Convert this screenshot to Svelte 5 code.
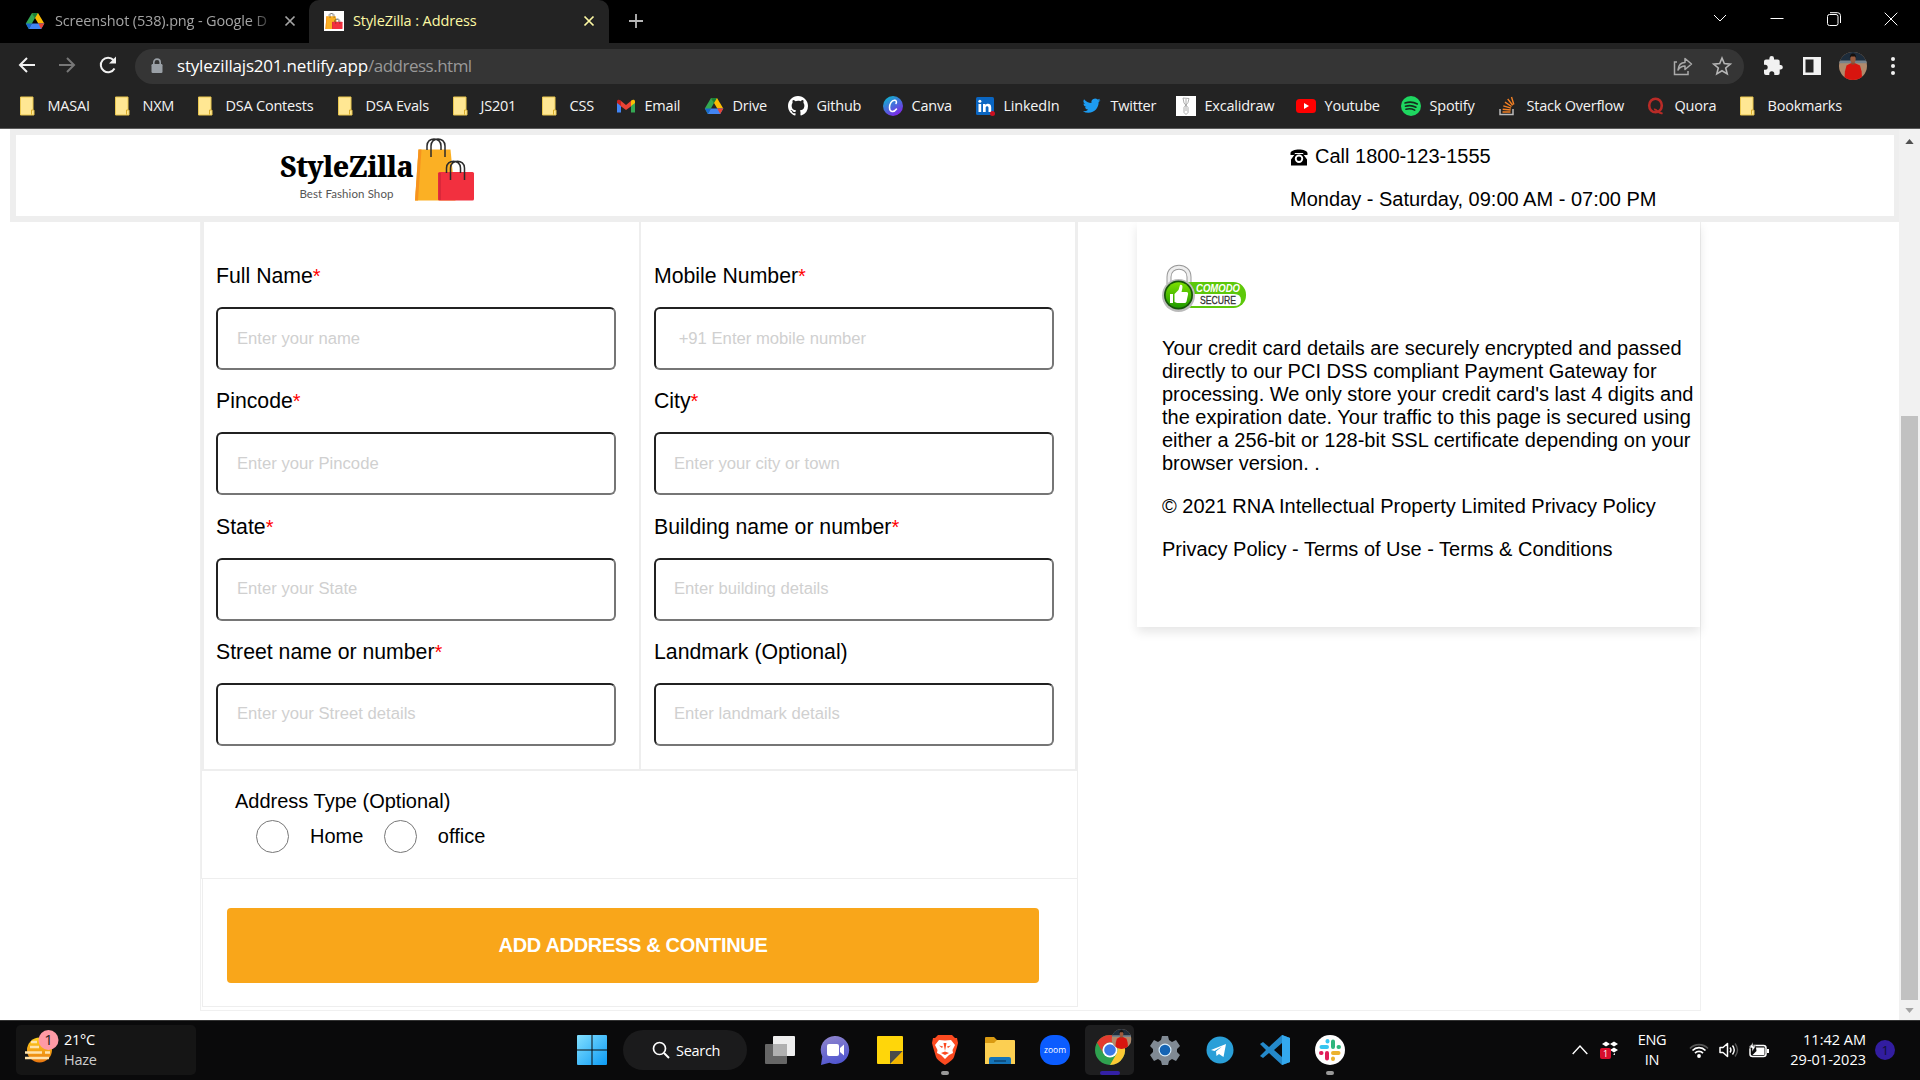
<script>
  const bookmarks = [
    ['folder', 'MASAI'], ['folder', 'NXM'], ['folder', 'DSA Contests'], ['folder', 'DSA Evals'],
    ['folder', 'JS201'], ['folder', 'CSS'], ['gmail', 'Email'], ['drive', 'Drive'],
    ['github', 'Github'], ['canva', 'Canva'], ['linkedin', 'LinkedIn'], ['twitter', 'Twitter'],
    ['excalidraw', 'Excalidraw'], ['youtube', 'Youtube'], ['spotify', 'Spotify'],
    ['stack', 'Stack Overflow'], ['quora', 'Quora'], ['folder', 'Bookmarks']
  ];
  const columns = [
    [
      { label: 'Full Name', required: true, hint: 'Enter your name' },
      { label: 'Pincode', required: true, hint: 'Enter your Pincode' },
      { label: 'State', required: true, hint: 'Enter your State' },
      { label: 'Street name or number', required: true, hint: 'Enter your Street details' }
    ],
    [
      { label: 'Mobile Number', required: true, hint: ' +91 Enter mobile number' },
      { label: 'City', required: true, hint: 'Enter your city or town' },
      { label: 'Building name or number', required: true, hint: 'Enter building details' },
      { label: 'Landmark (Optional)', required: false, hint: 'Enter landmark details' }
    ]
  ];
  const apps = ['taskview', 'chat', 'notes', 'brave', 'files', 'zoom', 'chrome', 'settings', 'telegram', 'vscode', 'slack'];
</script>

{#snippet drive()}
  <svg viewBox="0 0 20 20" width="20" height="20">
    <path d="M7 2h6l6.3 10.5h-6z" fill="#fbbc04" />
    <path d="M7 2 .8 12.6 3.8 18 10 7z" fill="#34a853" />
    <path d="M3.8 18 6.8 12.5h12.5L16.2 18z" fill="#4285f4" />
    <path d="M13.3 12.5h6L16.2 18z" fill="#ea4335" />
    <path d="M7 2h6l-3 5z" fill="#188038" />
    <path d="M3.8 18 6.8 12.5h-6z" fill="#1967d2" />
  </svg>
{/snippet}

{#snippet bags()}
  <path d="M3.500 12.500h32l5 51H0z" fill="#fbb024" />
  <path d="M3.500 12.500h3L3 63.500H0z" fill="#f7931e" />
  <path d="M12 13V9c0-9.500 14-9.500 14 0v4M16 20V9c0-9.500 14-9.500 14 0v11" fill="none" stroke="#2b2b2b" stroke-width="1.500" />
  <rect x="23" y="35" width="36" height="28.500" rx="1.500" fill="#f2303f" />
  <path d="M23.500 36H26v27h-2.500z" fill="#d9283a" />
  <path d="M31.500 36v-5c0-9 14-9 14 0v5M35.500 43V31c0-9 14-9 14 0v12" fill="none" stroke="#2b2b2b" stroke-width="1.500" />
{/snippet}

{#snippet portrait()}
  <clipPath id="face"><circle cx="13" cy="13" r="13" /></clipPath>
  <g clip-path="url(#face)">
    <path d="M0 0h26v26H0z" fill="#b08a6c" />
    <path d="M0 0h26v9H0z" fill="#1d2c3b" />
    <path d="M0 8h26v2.500H0z" fill="#76828c" />
    <path d="M5 26l.5-8L7 12.500l4-2h4l4.500 2L21 18l.5 8z" fill="#d8150f" />
    <path d="M11.500 8h3v3.500h-3z" fill="#8a4c33" />
    <ellipse cx="13" cy="6.500" rx="2.500" ry="3.500" fill="#9b5b3e" />
    <path d="M10 5.500c0-5.500 6-5.500 6 0l-1-1.300h-4z" fill="#15100e" />
  </g>
{/snippet}

{#snippet mark(name)}
  {#if name === 'folder'}
    <svg class="mark" viewBox="0 0 20 20"><path d="M1.500 1H14v12.500l1 1V19H1.500z" fill="#ffe793" stroke="#e9c64f" /><path d="M12.500 18.500v-4.500h2" fill="none" stroke="#d9ad2b" /></svg>
  {:else if name === 'gmail'}
    <svg class="mark" viewBox="0 0 20 20"><path d="M1 5v11.500h4V9z" fill="#4285f4" /><path d="M15 9v7.500h4V5z" fill="#34a853" /><path d="M4.500 4.500 10 9l5.500-4.500V10L10 14l-5.500-4z" fill="#ea4335" /><path d="M1 5.500c0-2 2-2.500 4-.8V10L1 7z" fill="#c5221f" /><path d="M19 5.500c0-2-2-2.500-4-.8V10l4-3z" fill="#fbbc04" /></svg>
  {:else if name === 'drive'}
    <span class="mark">{@render drive()}</span>
  {:else if name === 'github'}
    <svg class="mark" viewBox="0 0 16 16"><path fill="#fff" d="M8 0C3.580 0 0 3.580 0 8c0 3.540 2.290 6.530 5.470 7.590.4.070.550-.170.550-.380 0-.190-.010-.820-.010-1.490-2.010.370-2.530-.490-2.690-.940-.090-.230-.480-.940-.820-1.130-.280-.150-.680-.520-.010-.530.630-.010 1.080.580 1.230.820.720 1.210 1.870.870 2.330.660.070-.520.280-.870.510-1.070-1.780-.200-3.640-.890-3.640-3.950 0-.870.310-1.590.820-2.150-.080-.200-.360-1.020.080-2.120 0 0 .670-.210 2.200.820A7.600 7.600 0 0 1 8 3.860c.680 0 1.360.090 2 .270 1.530-1.040 2.200-.820 2.200-.820.440 1.100.160 1.920.080 2.120.510.560.820 1.270.820 2.150 0 3.070-1.870 3.750-3.650 3.950.290.250.540.730.540 1.480 0 1.070-.010 1.930-.010 2.200 0 .210.150.460.550.380A8.010 8.010 0 0 0 16 8c0-4.420-3.580-8-8-8z" /></svg>
  {:else if name === 'canva'}
    <svg class="mark" viewBox="0 0 20 20"><defs><linearGradient id="cv" x1="0" y1="0" x2=".6" y2="1"><stop offset="0" stop-color="#00c4cc" /><stop offset="1" stop-color="#7d2ae8" /></linearGradient></defs><circle cx="10" cy="10" r="10" fill="url(#cv)" /><path d="M13 7.500c1-1.500.3-3.300-1.500-3.200C8.500 4.500 6.500 8 6.500 11.500c0 5 4.500 5 7 1.500" fill="none" stroke="#fff" stroke-width="1.500" stroke-linecap="round" /></svg>
  {:else if name === 'linkedin'}
    <svg class="mark" viewBox="0 0 20 20"><rect x="1" y="1" width="18" height="18" rx="1.500" fill="#0a66c2" /><path d="M3.500 8h2.700v8H3.500zM8 8h2.500v1.200c1.200-2.200 5.700-2 5.700 2V16h-2.700v-4.300c0-2-2.800-2-2.800 0V16H8z" fill="#fff" /><circle cx="4.850" cy="5.300" r="1.500" fill="#fff" /><circle cx="17.500" cy="17.500" r="2.500" fill="#cc1020" /></svg>
  {:else if name === 'twitter'}
    <svg class="mark" viewBox="0 0 24 24"><path transform="translate(1 1) scale(.88)" fill="#1d9bf0" d="M23.950 4.570a10 10 0 0 1-2.820.77 4.960 4.960 0 0 0 2.160-2.720c-.95.55-2 .95-3.130 1.180a4.920 4.920 0 0 0-8.380 4.480C7.690 8.090 4.070 6.130 1.640 3.160a4.920 4.920 0 0 0 1.520 6.570 4.900 4.900 0 0 1-2.230-.61v.06a4.920 4.920 0 0 0 3.950 4.830 5 5 0 0 1-2.210.08 4.940 4.940 0 0 0 4.600 3.420A9.870 9.870 0 0 1 0 19.540a14 14 0 0 0 7.550 2.210c9.050 0 14-7.500 14-13.980 0-.21 0-.42-.02-.63a9.940 9.940 0 0 0 2.460-2.550z" /></svg>
  {:else if name === 'excalidraw'}
    <svg class="mark" viewBox="0 0 20 20"><path d="M0 0h20v20H0z" fill="#fff" /><path d="M7 2l6 .5-1 4-4 5v5l2 2 2-2v-5L8 7 7 2m3 1v12" fill="none" stroke="#999" stroke-width=".8" /></svg>
  {:else if name === 'youtube'}
    <svg class="mark" viewBox="0 0 20 20"><rect y="3" width="20" height="14" rx="3.500" fill="#f00" /><path d="m8 7 5 3-5 3z" fill="#fff" /></svg>
  {:else if name === 'spotify'}
    <svg class="mark" viewBox="0 0 20 20"><circle cx="10" cy="10" r="10" fill="#1ed760" /><path d="M4 7c4-1.300 9-.9 12.300 1M4.500 10.200c3.500-1 7.500-.6 10.500 1M5 13.200c3-.8 6-.5 8.700.9" fill="none" stroke="#152b1c" stroke-width="1.600" stroke-linecap="round" /></svg>
  {:else if name === 'stack'}
    <svg class="mark" viewBox="0 0 20 20"><path d="M2 13v5.500h13V13" fill="none" stroke="#bcbbbb" stroke-width="1.500" /><path d="M4.500 16h8M4.700 13.200l8 .8M5.300 9.800l7.700 2.300M7 6.200l6.500 4.300M9.700 3l5 6.200M13.500 1l2.300 7.500" stroke="#f48024" stroke-width="1.400" /></svg>
  {:else if name === 'quora'}
    <svg class="mark" viewBox="0 0 20 20"><ellipse cx="9.500" cy="9.500" rx="6.300" ry="6.800" fill="none" stroke="#b92b27" stroke-width="2.600" /><path d="M8 13.500c3-1 4 5 8.500 3.500" fill="none" stroke="#b92b27" stroke-width="2" /></svg>
  {/if}
{/snippet}

{#snippet cross()}
  <svg class="cross" viewBox="0 0 12 12" width="12" height="12"><path d="m1.500 1.500 9 9m0-9-9 9" stroke="currentColor" stroke-width="1.700" /></svg>
{/snippet}

<div class="screen">
  <div class="tabs">
    <div class="tab idle">
      <span class="tab-icon">{@render drive()}</span>
      <span class="tab-title">Screenshot (538).png - Google D</span>
      {@render cross()}
    </div>
    <div class="tab active">
      <svg class="favicon" viewBox="-5 -8 69 80" preserveAspectRatio="none"><path d="M-5-8h69v80H-5z" fill="#fff" />{@render bags()}</svg>
      <span class="tab-title">StyleZilla : Address</span>
      {@render cross()}
    </div>
    <svg class="new-tab" viewBox="0 0 16 16" width="16" height="16"><path d="M8 1v14M1 8h14" stroke="#b8b8b8" stroke-width="1.800" /></svg>
    <div class="window-buttons">
      <svg viewBox="0 0 14 14"><path d="m1 3 6 6 6-6" /></svg>
      <svg viewBox="0 0 14 14"><path d="M.5 6.500h13" /></svg>
      <svg viewBox="0 0 14 14"><rect x=".5" y="2.500" width="10.500" height="11" rx="2" /><path d="M3 .7h7.500q3 0 3 3V11" /></svg>
      <svg viewBox="0 0 14 14"><path d="m.7.7 12.600 12.600m0-12.600L.7 13.300" /></svg>
    </div>
  </div>

  <div class="toolbar">
    <div class="nav">
      <svg viewBox="0 0 20 20"><path d="M18 10H3m7-7-7 7 7 7" fill="none" stroke="#f1f1f1" stroke-width="2" /></svg>
      <svg viewBox="0 0 20 20"><path d="M2 10h15m-7-7 7 7-7 7" fill="none" stroke="#777" stroke-width="2" /></svg>
      <svg viewBox="0 0 20 20"><path d="M17.500 13.500A7.300 7.300 0 1 1 16.500 5" fill="none" stroke="#f1f1f1" stroke-width="2" /><path d="M19 1.500v7h-7z" fill="#f1f1f1" /></svg>
    </div>
    <div class="address">
      <svg class="lock" viewBox="0 0 12 16"><path d="M2.800 7V4.300a3.200 3.200 0 0 1 6.400 0V7" fill="none" stroke="#9aa0a6" stroke-width="1.600" /><rect x=".5" y="6" width="11" height="9" rx="1.200" fill="#9aa0a6" /></svg>
      <span class="host">stylezillajs201.netlify.app</span><span class="path">/address.html</span>
      <svg class="share" viewBox="0 0 20 20"><path d="M4 6H1.500v12.500H15V15" fill="none" stroke="#aaa" stroke-width="1.500" /><path d="M5 14c.5-5 3-7.500 7-7.500V2.500L18.500 8 12 13.500V10C9 10 7 11 5 14z" fill="none" stroke="#aaa" stroke-width="1.500" stroke-linejoin="round" /></svg>
      <svg class="star" viewBox="0 0 20 20"><path d="m10 2 2.300 5.600 6 .5-4.600 3.900 1.500 5.900-5.200-3.200-5.200 3.200L6.300 12 1.700 8.100l6-.5z" fill="none" stroke="#b5b5b5" stroke-width="1.600" /></svg>
    </div>
    <div class="actions">
      <svg viewBox="0 0 22 22"><path fill="#f1f1f1" d="M19 10h-1.300V6.500a2 2 0 0 0-2-2H12V3.300a2.300 2.300 0 0 0-4.600 0v1.200H4a2 2 0 0 0-2 2v3.300h1.200a2.500 2.500 0 0 1 0 5H2V18a2 2 0 0 0 2 2h3.300v-1.200a2.500 2.500 0 0 1 5 0V20h3.400a2 2 0 0 0 2-2v-3.500H19A2.300 2.300 0 0 0 19 10z" /></svg>
      <svg viewBox="0 0 22 22"><path fill="#f1f1f1" fill-rule="evenodd" d="M2 2h18v18H2zm2.500 2.500v13h8v-13z" /></svg>
      <svg class="avatar" viewBox="0 0 26 26">{@render portrait()}</svg>
      <svg class="more" viewBox="0 0 22 22"><g fill="#f1f1f1"><circle cx="11" cy="4" r="2" /><circle cx="11" cy="11" r="2" /><circle cx="11" cy="18" r="2" /></g></svg>
    </div>
  </div>

  <div class="bookmarks">
    {#each bookmarks as [icon, title]}
      <div class="bookmark">{@render mark(icon)}<span>{title}</span></div>
    {/each}
  </div>

  <div class="viewport">
    <div class="page">
      <header>
        <div class="brand">
          <div class="brand-text"><span class="brand-name">StyleZilla</span><span class="slogan">Best Fashion Shop</span></div>
          <svg class="brand-bags" viewBox="0 0 60 65">{@render bags()}</svg>
        </div>
        <div class="contact">
          <div class="call">
            <svg viewBox="0 0 18 18"><path d="M.5 7V5C1 .2 17 .2 17.500 5v2h-4.300V5H4.800v2z" /><path fill-rule="evenodd" d="M5 6h8l4 5.500V17.500H1v-6zM9 6.500a4.200 4.200 0 1 0 0 8.400 4.200 4.200 0 0 0 0-8.400z" /><circle cx="9" cy="10.700" r="2.300" /></svg>
            Call 1800-123-1555
          </div>
          <div>Monday - Saturday, 09:00 AM - 07:00 PM</div>
        </div>
      </header>

      <main>
        <form>
          <div class="fields">
            {#each columns as column}
              <div class="column">
                {#each column as field}
                  <label>
                    <span class="caption">{field.label}{#if field.required}<i>*</i>{/if}</span>
                    <input type="text" placeholder={field.hint} />
                  </label>
                {/each}
              </div>
            {/each}
          </div>
          <div class="kind">
            <div>Address Type (Optional)</div>
            <div class="choices">
              <span class="radio"></span><span class="choice">Home</span>
              <span class="radio"></span><span class="choice">office</span>
            </div>
          </div>
          <div class="submit"><button type="button">ADD ADDRESS &amp; CONTINUE</button></div>
        </form>
        <aside>
          <svg class="comodo" viewBox="0 0 86 50">
            <defs><linearGradient id="gr" x2="0" y2="1"><stop offset="0" stop-color="#7be000" /><stop offset="1" stop-color="#1f9a00" /></linearGradient></defs>
            <path d="M7 20V13c0-13 20-13 20 0v7" fill="none" stroke="#999" stroke-width="5" />
            <path d="M7 20V13c0-13 20-13 20 0v7" fill="none" stroke="#eee" stroke-width="3" />
            <rect x="17" y="18" width="67" height="26" rx="12.500" fill="#5cc80a" />
            <path d="M20 30h52q7 0 7 6t-7 6H20z" fill="#fff" />
            <circle cx="16.500" cy="31.500" r="16.500" fill="#bbb" /><circle cx="16.500" cy="31" r="14.500" fill="#17540a" /><circle cx="16.500" cy="31" r="12.800" fill="url(#gr)" />
            <path d="M8 30h3v9H8zM12.500 30l4-4 1.500-5c3-1 3 2 1.500 7h5q2 0 1.500 2.500l-1.500 7q-.5 1.500-2 1.500H15l-2.500-1z" fill="#fff" />
            <text class="comodo-name" x="34" y="28" textLength="44" lengthAdjust="spacingAndGlyphs">COMODO</text>
            <text class="comodo-tag" x="38" y="40" textLength="36" lengthAdjust="spacingAndGlyphs">SECURE</text>
          </svg>
          <p>Your credit card details are securely encrypted and passed directly to our PCI DSS compliant Payment Gateway for processing. We only store your credit card's last 4 digits and the expiration date. Your traffic to this page is secured using either a 256-bit or 128-bit SSL certificate depending on your browser version. .</p>
          <p>© 2021 RNA Intellectual Property Limited Privacy Policy</p>
          <p>Privacy Policy - Terms of Use - Terms &amp; Conditions</p>
        </aside>
      </main>
    </div>
    <div class="scrollbar">
      <svg viewBox="0 0 10 6"><path d="M0 6 5 0l5 6z" fill="#505050" /></svg>
      <div class="thumb"></div>
      <svg viewBox="0 0 10 6"><path d="m0 0 5 6 5-6z" fill="#a3a3a3" /></svg>
    </div>
  </div>

  <div class="taskbar">
    <div class="weather">
      <svg viewBox="0 0 36 36" width="36" height="36"><defs><linearGradient id="sun" x2="0" y2="1"><stop offset="0" stop-color="#ffd21c" /><stop offset="1" stop-color="#e87610" /></linearGradient></defs>
        <circle cx="15.500" cy="18" r="12.500" fill="url(#sun)" /><path d="M7 10h6M6 15h9M1 20.500h17m3 0h5M1 26h24" stroke="#ffe3ac" stroke-width="2.300" />
        <circle cx="24.500" cy="8" r="10" fill="#ff9aa5" /><text x="24.500" y="13" text-anchor="middle" class="badge-digit">1</text></svg>
      <div><div>21°C</div><div class="haze">Haze</div></div>
    </div>
    <div class="dock">
      <svg class="start" viewBox="0 0 30 30"><defs><linearGradient id="win" x2="1" y2="1"><stop offset="0" stop-color="#83e0ff" /><stop offset="1" stop-color="#0c9bf5" /></linearGradient></defs><path d="M0 1q0-1 1-1h13.500v14.500H0zM15.500 0H29q1 0 1 1v13.500H15.500zM0 15.500h14.500V30H1q-1 0-1-1zM15.500 15.500H30V29q0 1-1 1H15.500z" fill="url(#win)" /></svg>
      <div class="search">
        <svg viewBox="0 0 18 18"><circle cx="7.500" cy="7.500" r="6" fill="none" stroke="#fff" stroke-width="1.700" /><path d="m12 12 5 5" stroke="#fff" stroke-width="2" /></svg>
        <span>Search</span>
      </div>
      {#each apps as app}
        <div class="app" class:current={app === 'chrome'} class:open={app === 'brave' || app === 'slack'}>
          <svg viewBox="0 0 30 30">
            {#if app === 'taskview'}
              <rect x="0" y="9" width="22" height="20" rx="1" fill="#666" /><rect x="8" y="1" width="22" height="20" rx="1" fill="#eee" /><path d="M8 9h14v12H8z" fill="#b0b0b0" />
            {:else if app === 'chat'}
              <defs><linearGradient id="ch" x2=".3" y2="1"><stop offset="0" stop-color="#9287cc" /><stop offset="1" stop-color="#5257d0" /></linearGradient></defs>
              <path d="M15 1a14 14 0 1 1-5.500 26.800L1 30l1.300-8.500A14 14 0 0 1 15 1z" fill="url(#ch)" /><rect x="7" y="9" width="12" height="12" rx="2" fill="#fff" /><path d="m20 13 4-3.500v11L20 17z" fill="#fff" />
            {:else if app === 'notes'}
              <path d="M2 2q0-1 1-1h24q1 0 1 1v27H3q-1 0-1-1z" fill="#ffd60a" /><path d="M15 29V16h13z" fill="#4a4a4a" /><path d="M16 29l12-13v13z" fill="#f2b400" />
            {:else if app === 'brave'}
              <path d="M8 0h14l3 3h2l1 5-1 4-3 10q-1 3-9 8-8-5-9-8L3 12 2 8l1-5h2z" fill="#fb4a20" />
              <path d="m15 5.500-6-.5-4 5 2.500 5L7 18l4 2 4 4 4-4 4-2-.5-3 2.500-5-4-5z" fill="#fff" />
              <path d="M9 10.500l4 1-1 1.500zM21 10.500l-4 1 1 1.500zM13.500 8h3L15 16zM11 18l4-1.500 4 1.500-4 2z" fill="#fb4a20" />
            {:else if app === 'files'}
              <path d="M0 3q0-1 1-1h8l3 3h17v22H0z" fill="#d99a12" /><path d="M0 8h9l3-3h17q1 0 1 1v23H0z" fill="#fccf52" /><path d="M4 29v-5q0-2 2-2h18q2 0 2 2v5z" fill="#1574b8" /><path d="M9 26h12" stroke="#0c436f" stroke-width="1.500" />
            {:else if app === 'zoom'}
              <rect width="30" height="30" rx="13" fill="#0b5cff" /><text class="zoom-name" x="15" y="18" text-anchor="middle" textLength="22" lengthAdjust="spacingAndGlyphs">zoom</text>
            {:else if app === 'chrome'}
              <circle cx="15" cy="15" r="15" fill="#2fa14f" /><path d="M15 0a15 15 0 0 1 13 7.500H15A7.500 7.500 0 0 0 8.500 18.700L2 7.500A15 15 0 0 1 15 0z" fill="#e33b2e" /><path d="M28 7.500A15 15 0 0 1 15 30l6.500-11.300A7.500 7.500 0 0 0 20 9.500l8-2z" fill="#fcc934" /><circle cx="15" cy="15" r="7.500" fill="#fff" /><circle cx="15" cy="15" r="5.800" fill="#3b78e7" /><g transform="translate(16.500 -6) scale(.77)">{@render portrait()}</g>
            {:else if app === 'settings'}
              <path d="m12 1h6l1 4 3 2 4-2 4 6-3 3v3l3 3-4 6-4-2-3 2-1 4h-6l-1-4-3-2-4 2-4-6 3-3v-3l-3-3 4-6 4 2 3-2z" fill="#808a94" /><circle cx="15" cy="15" r="6.500" fill="#d7ecfa" /><circle cx="15" cy="15" r="5.300" fill="#1464b4" />
            {:else if app === 'telegram'}
              <circle cx="15" cy="15" r="13.500" fill="#2a9fd8" /><path d="m6 15 15-6-2.500 13-4.500-3-2.500 2-.5-4.500 6-5-7.500 4.500z" fill="#fff" />
            {:else if app === 'vscode'}
              <path d="m22 0 8 3v24l-8 3L9 18l-6 5-3-2 6-6-6-6 3-2 6 5zm0 8-8 7 8 7z" fill="#2489ca" fill-rule="evenodd" /><path d="m22 0 8 3v24l-8 3z" fill="#33a8ee" />
            {:else}
              <circle cx="15" cy="15" r="15" fill="#fff" /><g stroke-width="4" stroke-linecap="round"><path d="M6.500 12H12M12.500 6v.5" stroke="#36c5f0" /><path d="M18 6.500V12M23.500 12h.5" stroke="#2eb67d" /><path d="M18 18h5.500M18 23.500v.5" stroke="#ecb22e" /><path d="M12 18v5.500M6.500 18H6" stroke="#e01e5a" /></g>
            {/if}
          </svg>
        </div>
      {/each}
    </div>
    <div class="tray">
      <svg class="up" viewBox="0 0 16 10"><path d="m.7 9 7.300-8 7.300 8" fill="none" stroke="#fff" stroke-width="1.400" /></svg>
      <svg class="dropbox" viewBox="0 0 20 20"><path d="m2 4 4-2.500L10 4 6 6.500zm8 0 4-2.500L18 4l-4 2.500zm0 6 4-2.500 4 2.500-4 2.500zm3 4.500 2-1.500v2z" fill="#fff" /><rect y="8" width="11" height="11" rx="2" fill="#d80d2c" /><text x="5.500" y="17" text-anchor="middle" class="alert-digit">1</text></svg>
      <div class="language"><div>ENG</div><div>IN</div></div>
      <svg class="wifi" viewBox="0 0 20 16"><g fill="none" stroke-width="1.700"><path d="M1 6.500a12.500 12.500 0 0 1 18 0" stroke="#555" /><path d="M3.500 8.500a9 9 0 0 1 13 0M6 11.200a5.500 5.500 0 0 1 8 0" stroke="#fff" /></g><circle cx="10" cy="14" r="1.900" fill="#fff" /></svg>
      <svg class="volume" viewBox="0 0 20 16"><path d="M1 5.500h3L8.500 1.500v13L4 10.500H1z" fill="none" stroke="#fff" stroke-width="1.500" stroke-linejoin="round" /><path d="M11 5.500q2 2.500 0 5M13.500 3.500q3.500 4.500 0 9" fill="none" stroke="#fff" stroke-width="1.400" /><path d="M16 1.500q5 6.500 0 13" fill="none" stroke="#555" stroke-width="1.400" /></svg>
      <svg class="battery" viewBox="0 0 20 16"><rect x="1" y="3.500" width="16" height="11" rx="2.500" fill="none" stroke="#fff" stroke-width="1.500" /><path d="M7 5.500h8.500v7.500H3.500l4-4zM18 7h2v4h-2z" fill="#fff" /><path d="M4 0 0 6h3v4l4-6H4z" fill="#fff" stroke="#0a0a0a" stroke-width=".6" /></svg>
      <div class="clock"><div>11:42 AM</div><div>29-01-2023</div></div>
      <div class="notice">1</div>
    </div>
  </div>
</div>

<style>
  :global(body) { margin: 0; overflow: hidden; background: #fff; }
  .screen { width: 1920px; height: 1080px; display: flex; flex-direction: column; font-family: "Open Sans", "Noto Sans", sans-serif; font-size: 14.500px; letter-spacing: -.1px; overflow: hidden; }
  .screen * { box-sizing: border-box; }
  svg { display: block; flex: none; overflow: visible; }
  .tabs { height: 43px; background: #000; display: flex; align-items: flex-end; }
  .tab { height: 43px; display: flex; align-items: center; }
  .tab-title { flex: 1; white-space: nowrap; line-height: 24px; }
  .idle { width: 309px; padding: 0 13px 2px 25px; color: #a4a4a4; }
  .idle .tab-title { margin: 0 12px 0 10px; letter-spacing: -.15px; mask-image: linear-gradient(90deg, #000 90%, transparent 102%); }
  .active { width: 300px; padding: 0 14px 2px 15px; background: #232323; color: #fdf9a4; border-radius: 10px 10px 0 0; }
  .active .tab-title { margin-left: 9px; }
  .favicon { width: 20px; height: 20px; }
  .new-tab { margin: 0 0 14px 19px; }
  .window-buttons { margin-left: auto; height: 43px; padding: 0 22px 6px 0; display: flex; align-items: center; gap: 43px; }
  .window-buttons svg { width: 14px; height: 14px; fill: none; stroke: #fff; stroke-width: 1; }
  .toolbar { height: 45px; background: #232323; display: flex; align-items: center; }
  .nav { width: 135px; padding: 0 0 1px 17px; display: flex; gap: 20px; }
  .nav svg { width: 20px; height: 20px; }
  .address { width: 1609px; height: 35px; margin-top: 1px; border-radius: 18px; background: #353535; display: flex; align-items: center; padding: 0 12px 0 16px; font-size: 17px; line-height: 24px; letter-spacing: -.2px; }
  .address span { margin-bottom: 1px; }
  .lock { width: 12px; height: 16px; margin-right: 14px; }
  .host { color: #fff; }
  .path { color: #999; letter-spacing: -.5px; }
  .share { width: 20px; height: 20px; margin-left: auto; }
  .star { width: 20px; height: 20px; margin-left: 19px; }
  .actions { display: flex; align-items: center; padding-left: 18px; gap: 17px; }
  .actions svg { width: 22px; height: 22px; }
  .actions .avatar { width: 28px; height: 28px; margin-left: -1px; }
  .actions .more { margin-left: -2px; }
  .bookmarks { height: 41px; background: #232323; border-bottom: 1px solid #5a5a5a; padding: 0 0 5px 19px; display: grid; align-items: center; grid-template-columns: 95px 83px 140px 115px 89px 75px 88px 84px 95px 92px 107px 94px 120px 105px 97px 148px 93px 130px; color: #f4f4f4; letter-spacing: -.22px; }
  .bookmark { display: flex; align-items: center; gap: 8.500px; white-space: nowrap; line-height: 20px; }
  .mark { width: 20px; height: 20px; flex: none; }
  .viewport { height: 891px; display: flex; background: #fff; font: 20px/23px "Liberation Sans", Arial, sans-serif; letter-spacing: 0; color: #000; }
  .page { flex: 1; display: flex; flex-direction: column; }
  header { margin-left: 10px; height: 93px; border: 6px solid #eee; border-right-width: 5px; display: flex; }
  .brand { width: 1274px; padding-left: 262px; display: flex; }
  .brand-text { width: 137px; display: flex; flex-direction: column; align-items: center; padding-top: 11px; }
  .brand-name { font: 800 28px/40px "Noto Serif", "DejaVu Serif", "Liberation Serif", serif; letter-spacing: -.6px; }
  .slogan { font: 11.500px/16px Lato, "Open Sans", sans-serif; color: #555; letter-spacing: .1px; }
  .brand-bags { width: 60px; height: 65px; margin-top: 2px; }
  .contact { display: flex; flex-direction: column; gap: 20px; padding-top: 10px; white-space: nowrap; }
  .call { display: flex; align-items: center; gap: 7px; }
  .call svg { width: 18px; height: 18px; }
  main { width: 1501px; height: 789px; margin-left: 200px; border: 1px solid #f0f0f0; border-top: 0; display: flex; align-items: flex-start; }
  form { width: 877px; display: flex; flex-direction: column; }
  .fields { height: 549px; display: flex; border: solid #eee; border-width: 0 3px 2px; }
  .column { padding: 43px 0 0 12px; width: 435px; display: flex; flex-direction: column; gap: 24px; }
  .column + .column { width: 436px; border-left: 2px solid #eee; padding-left: 13px; }
  .column + .column input { padding-left: 18px; }
  label { display: flex; flex-direction: column; gap: 19px; height: 101.300px; }
  .caption { font-size: 21.250px; line-height: 23px; height: 23px; flex: none; }
  .caption i { color: #f00; font-style: normal; font-size: 20px; }
  input { width: 400px; height: 63px; flex: none; border: 2px inset #767676; border-radius: 6px; padding: 0 19px; font: 16.667px "Liberation Sans", Arial, sans-serif; background: #fff; }
  input::placeholder { color: #d0d0d0; opacity: 1; }
  .kind { height: 108px; border: solid #eee; border-width: 0 1px 1px; padding: 19px 0 0 33px; }
  .choices { display: flex; align-items: center; padding-left: 21px; margin-top: 7px; }
  .radio { width: 33px; height: 33px; border: 1px solid #777; border-radius: 50%; margin-right: 21px; }
  .choice { margin-right: 20.500px; }
  .submit { height: 128px; margin-left: 1px; border: solid #eee; border-width: 0 1px 1px; padding: 29px 0 0 24px; }
  button { width: 812px; height: 75px; border: 0; border-radius: 4px; background: #f9a61a; color: #fff; font: bold 20px "Liberation Sans", Arial, sans-serif; letter-spacing: -.32px; padding: 0; }
  aside { width: 563px; height: 405px; margin-left: auto; padding: 42px 0 0 25px; box-shadow: 0 5px 10px rgba(0, 0, 0, .1); clip-path: inset(0 -15px -20px -15px); background: #fff; }
  .comodo { width: 86px; height: 50px; margin-bottom: 23px; }
  .comodo-name { font: italic bold 10px "Liberation Sans", sans-serif; fill: #fff; }
  .comodo-tag { font: 11px "Liberation Sans", sans-serif; fill: #333; stroke: #333; stroke-width: .3; }
  p { margin: 0 0 20px; }
  .scrollbar { width: 21px; background: #f1f1f1; display: flex; flex-direction: column; align-items: center; padding: 10px 0 7px; }
  .scrollbar svg { width: 9px; height: 5px; }
  .thumb { width: 17px; height: 584px; background: #c1c1c1; margin: 272px 0 8px; }
  .taskbar { height: 60px; background: #0a0a0b; border-top: 1px solid #333; padding-bottom: 1px; color: #fff; display: flex; align-items: center; letter-spacing: -.3px; }
  .weather { width: 180px; height: 50px; margin-left: 16px; padding-left: 8px; border-radius: 5px; background: #151515; display: flex; align-items: center; gap: 4px; line-height: 20px; }
  .haze { color: #ccc; }
  .badge-digit { font: 15px "Open Sans", sans-serif; fill: #222; }
  .dock { margin-left: 381px; display: flex; align-items: center; }
  .start { width: 30px; height: 30px; }
  .search { width: 124px; height: 40px; border-radius: 20px; margin: 0 8px 0 16px; padding-left: 29px; background: #1b1b1c; display: flex; align-items: center; gap: 6px; }
  .search svg { width: 18px; height: 18px; }
  .app { width: 49px; height: 50px; margin-right: 6px; display: grid; place-items: center; border-radius: 5px; position: relative; }
  .app svg { width: 30px; height: 30px; }
  .current { background: #1e1e1f; }
  .current::after, .open::after { content: ""; position: absolute; bottom: 0; left: 50%; height: 4px; width: 20px; margin-left: -10px; border-radius: 2px; background: #3320a5; }
  .open::after { width: 8px; margin-left: -4px; background: #999; }
  .zoom-name { font: 9.500px "Open Sans", sans-serif; fill: #fff; letter-spacing: 0; }
  .tray { margin-left: auto; padding-right: 25px; display: flex; align-items: center; line-height: 20px; }
  .up { width: 16px; height: 10px; margin-right: 12px; }
  .dropbox { width: 20px; height: 20px; margin-right: 17px; }
  .alert-digit { font: 9px "Open Sans", sans-serif; fill: #fff; }
  .language { width: 30px; text-align: center; margin-right: 22px; }
  .wifi { width: 20px; height: 16px; margin-right: 10px; }
  .volume { width: 20px; height: 16px; margin-right: 10px; }
  .battery { width: 20px; height: 16px; margin-right: 19px; }
  .clock { width: 78px; text-align: right; white-space: nowrap; margin-right: 9px; letter-spacing: 0; }
  .notice { width: 20px; height: 20px; border-radius: 50%; background: #321da0; color: #101033; text-align: center; font-size: 13px; }
</style>
